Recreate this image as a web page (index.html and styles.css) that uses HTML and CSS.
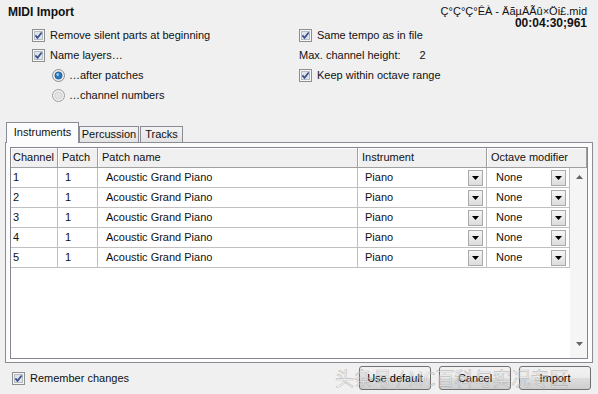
FILE: index.html
```html
<!DOCTYPE html>
<html>
<head>
<meta charset="utf-8">
<title>MIDI Import</title>
<link rel="stylesheet" href="styles.css">
</head>
<body>
<div class="dialog">
  <header class="top">
    <h1 class="title">MIDI Import</h1>
    <div class="fileinfo">
      <div class="fname">Ç°Ç°Ç°ÊÀ - ÄãµÄÃû×Öi£.mid</div>
      <div class="time">00:04:30;961</div>
    </div>
  </header>

  <section class="options">
    <div class="col">
      <label class="opt"><svg class="cb" viewBox="0 0 13 13"><rect x="0.5" y="0.5" width="12" height="12" fill="#f6f6f6" stroke="#8e8f8f"/><rect x="2.5" y="2.5" width="8" height="8" fill="#dfe4ea" stroke="#b6bcc4"/><path d="M3.4 6.4l2.1 2.4 4.2-5.4" fill="none" stroke="#3b4f8c" stroke-width="1.7"/></svg><span>Remove silent parts at beginning</span></label>
      <label class="opt"><svg class="cb" viewBox="0 0 13 13"><rect x="0.5" y="0.5" width="12" height="12" fill="#f6f6f6" stroke="#8e8f8f"/><rect x="2.5" y="2.5" width="8" height="8" fill="#dfe4ea" stroke="#b6bcc4"/><path d="M3.4 6.4l2.1 2.4 4.2-5.4" fill="none" stroke="#3b4f8c" stroke-width="1.7"/></svg><span>Name layers…</span></label>
      <label class="opt sub"><svg class="rb" viewBox="0 0 13 13"><circle cx="6.5" cy="6.5" r="6" fill="#ececec" stroke="#8e8f8f"/><circle cx="6.5" cy="6.5" r="3.6" fill="#2a78c0" stroke="#1b4e85" stroke-width="0.7"/><circle cx="5.7" cy="5.6" r="1.3" fill="#9fd3ff"/></svg><span>…after patches</span></label>
      <label class="opt sub"><svg class="rb" viewBox="0 0 13 13"><circle cx="6.5" cy="6.5" r="6" fill="#f1f1f1" stroke="#9a9b9b"/><circle cx="6.5" cy="6.5" r="3.6" fill="#e2e2e2" stroke="#c9c9c9" stroke-width="0.7"/></svg><span>…channel numbers</span></label>
    </div>
    <div class="col">
      <label class="opt"><svg class="cb" viewBox="0 0 13 13"><rect x="0.5" y="0.5" width="12" height="12" fill="#f6f6f6" stroke="#8e8f8f"/><rect x="2.5" y="2.5" width="8" height="8" fill="#dfe4ea" stroke="#b6bcc4"/><path d="M3.4 6.4l2.1 2.4 4.2-5.4" fill="none" stroke="#3b4f8c" stroke-width="1.7"/></svg><span>Same tempo as in file</span></label>
      <div class="opt"><span class="lbl">Max. channel height:</span><span class="val">2</span></div>
      <label class="opt"><svg class="cb" viewBox="0 0 13 13"><rect x="0.5" y="0.5" width="12" height="12" fill="#f6f6f6" stroke="#8e8f8f"/><rect x="2.5" y="2.5" width="8" height="8" fill="#dfe4ea" stroke="#b6bcc4"/><path d="M3.4 6.4l2.1 2.4 4.2-5.4" fill="none" stroke="#3b4f8c" stroke-width="1.7"/></svg><span>Keep within octave range</span></label>
    </div>
  </section>

  <section class="tabs">
    <div class="tabbar">
      <div class="tab active">Instruments</div>
      <div class="tab">Percussion</div>
      <div class="tab">Tracks</div>
    </div>
    <div class="pane">
      <div class="frame">
        <div class="thead">
          <div class="th">Channel</div>
          <div class="th">Patch</div>
          <div class="th">Patch name</div>
          <div class="th">Instrument</div>
          <div class="th">Octave modifier</div>
        </div>
        <div class="tbody">
          <div class="rows">
            <div class="row"><div class="td c1">1</div><div class="td c2">1</div><div class="td c3">Acoustic Grand Piano</div><div class="td c4 combo"><span>Piano</span><span class="dd"><svg viewBox="0 0 7 4"><path d="M0 0h7L3.5 4z"/></svg></span></div><div class="td c5 combo"><span>None</span><span class="dd"><svg viewBox="0 0 7 4"><path d="M0 0h7L3.5 4z"/></svg></span></div></div>
            <div class="row"><div class="td c1">2</div><div class="td c2">1</div><div class="td c3">Acoustic Grand Piano</div><div class="td c4 combo"><span>Piano</span><span class="dd"><svg viewBox="0 0 7 4"><path d="M0 0h7L3.5 4z"/></svg></span></div><div class="td c5 combo"><span>None</span><span class="dd"><svg viewBox="0 0 7 4"><path d="M0 0h7L3.5 4z"/></svg></span></div></div>
            <div class="row"><div class="td c1">3</div><div class="td c2">1</div><div class="td c3">Acoustic Grand Piano</div><div class="td c4 combo"><span>Piano</span><span class="dd"><svg viewBox="0 0 7 4"><path d="M0 0h7L3.5 4z"/></svg></span></div><div class="td c5 combo"><span>None</span><span class="dd"><svg viewBox="0 0 7 4"><path d="M0 0h7L3.5 4z"/></svg></span></div></div>
            <div class="row"><div class="td c1">4</div><div class="td c2">1</div><div class="td c3">Acoustic Grand Piano</div><div class="td c4 combo"><span>Piano</span><span class="dd"><svg viewBox="0 0 7 4"><path d="M0 0h7L3.5 4z"/></svg></span></div><div class="td c5 combo"><span>None</span><span class="dd"><svg viewBox="0 0 7 4"><path d="M0 0h7L3.5 4z"/></svg></span></div></div>
            <div class="row"><div class="td c1">5</div><div class="td c2">1</div><div class="td c3">Acoustic Grand Piano</div><div class="td c4 combo"><span>Piano</span><span class="dd"><svg viewBox="0 0 7 4"><path d="M0 0h7L3.5 4z"/></svg></span></div><div class="td c5 combo"><span>None</span><span class="dd"><svg viewBox="0 0 7 4"><path d="M0 0h7L3.5 4z"/></svg></span></div></div>
          </div>
          <div class="vscroll">
            <svg class="arr" viewBox="0 0 7 4"><path d="M0 4h7L3.5 0z"/></svg>
            <svg class="arr" viewBox="0 0 7 4"><path d="M0 0h7L3.5 4z"/></svg>
          </div>
        </div>
      </div>
    </div>
  </section>

  <footer class="bottom">
    <label class="opt remember"><svg class="cb" viewBox="0 0 13 13"><rect x="0.5" y="0.5" width="12" height="12" fill="#f6f6f6" stroke="#8e8f8f"/><rect x="2.5" y="2.5" width="8" height="8" fill="#dfe4ea" stroke="#b6bcc4"/><path d="M3.4 6.4l2.1 2.4 4.2-5.4" fill="none" stroke="#3b4f8c" stroke-width="1.7"/></svg><span>Remember changes</span></label>
    <div class="buttons">
      <button class="btn">Use default</button>
      <button class="btn">Cancel</button>
      <button class="btn">Import</button>
    </div>
  </footer>
</div>
<div class="watermark">头条号 / MC百科与实况专区</div>
</body>
</html>
```

FILE: styles.css
```css
* { box-sizing: border-box; }
html, body { margin: 0; padding: 0; }
body {
  width: 598px;
  height: 394px;
  overflow: hidden;
  position: relative;
  background: #f0f0f0;
  color: #111;
  font-family: "Liberation Sans", Arial, sans-serif;
  font-size: 11px;
}
.dialog { display: flex; flex-direction: column; height: 394px; }

.top {
  height: 25px;
  display: flex;
  justify-content: space-between;
  align-items: flex-start;
  padding: 0 11px 0 8px;
}
.title {
  margin: 0;
  padding-top: 6px;
  font-size: 12px;
  line-height: 12px;
  font-weight: bold;
}
.fileinfo { text-align: right; padding-top: 5px; line-height: 12px; position: relative; z-index: 1; }
.time { font-weight: bold; font-size: 12px; }

.options {
  display: grid;
  grid-template-columns: 267px 1fr;
  padding-left: 32px;
  height: 97px;
}
.opt { height: 20px; display: flex; align-items: center; gap: 5px; }
.opt.sub { padding-left: 20px; gap: 4px; }
.cb, .rb { width: 13px; height: 13px; flex: none; display: block; }
.val { margin-left: 14px; }

.tabs { flex: 1; display: flex; flex-direction: column; padding: 0 5px; }
.tabbar { height: 20px; display: flex; align-items: flex-end; padding-left: 1px; }
.tab {
  height: 16px;
  line-height: 14px;
  border: 1px solid #898c95;
  border-bottom: none;
  background: linear-gradient(#f3f3f3, #e3e3e3);
  text-align: center;
  margin-left: 1px;
}
.tab:nth-child(1) { width: 73px; }
.tab:nth-child(2) { width: 60px; margin-left: 0; }
.tab:nth-child(3) { width: 43px; }
.tab.active {
  height: 21px;
  margin-left: 0;
  margin-bottom: -1px;
  background: #fcfcfc;
  position: relative;
  z-index: 1;
  line-height: 18px;
}
.pane {
  flex: 1;
  border: 1px solid #898c95;
  background: #fcfcfc;
  padding: 4px 4px 3px;
  display: flex;
}
.frame {
  flex: 1;
  border: 1px solid #828790;
  background: #fff;
  display: flex;
  flex-direction: column;
}
.thead {
  display: grid;
  grid-template-columns: 47px 40px 260px 129px 1fr;
  height: 20px;
}
.th {
  background: #f0f0f0;
  border-right: 1px solid #a0a0a0;
  border-bottom: 1px solid #a0a0a0;
  box-shadow: inset 1px 1px 0 #fff;
  padding-left: 4px;
  line-height: 19px;
  white-space: nowrap;
}
.th:first-child { padding-left: 2px; }
.tbody { flex: 1; display: flex; }
.rows { width: 559px; }
.row {
  display: grid;
  grid-template-columns: 47px 40px 260px 129px 83px;
  height: 20px;
}
.td {
  border-right: 1px solid #c0c0c0;
  border-bottom: 1px solid #c0c0c0;
  line-height: 19px;
  white-space: nowrap;
}
.c1 { padding-left: 2px; }
.c2 { padding-left: 7px; }
.c3 { padding-left: 8px; }
.c4 { padding-left: 7px; }
.c5 { padding-left: 9px; }
.combo { display: flex; justify-content: space-between; align-items: center; padding-right: 3px; }
.dd {
  width: 15px;
  height: 16px;
  border: 1px solid #a9a9a9;
  background: linear-gradient(#f6f6f6, #dcdcdc);
  display: flex;
  align-items: center;
  justify-content: center;
}
.dd svg { width: 7px; height: 4px; display: block; fill: #000; }
.vscroll {
  width: 17px;
  background: #f5f5f5;
  display: flex;
  flex-direction: column;
  justify-content: space-between;
  align-items: center;
  padding: 7px 0 12px 2px;
}
.arr { width: 7px; height: 4px; display: block; fill: #666; }

.bottom {
  height: 31px;
  display: flex;
  justify-content: space-between;
  align-items: flex-start;
  padding: 3px 7px 0 12px;
}
.remember { height: 24px; }
.buttons { display: flex; gap: 8px; }
.btn {
  width: 72px;
  height: 24px;
  border: 1px solid #707070;
  border-radius: 3px;
  background: linear-gradient(#f2f2f2 0%, #ebebeb 50%, #dddddd 51%, #cfcfcf 100%);
  font-family: "Liberation Sans", Arial, sans-serif;
  font-size: 11px;
  color: #000;
  padding: 0;
}
.watermark {
  position: absolute;
  left: 335px;
  top: 366px;
  font-family: "Noto Sans CJK SC", "Liberation Sans", sans-serif;
  font-size: 19px;
  line-height: 24px;
  color: rgba(255, 255, 255, 0.45);
  -webkit-text-stroke: 0.6px rgba(110, 110, 110, 0.4);
  white-space: nowrap;
  pointer-events: none;
}
```
